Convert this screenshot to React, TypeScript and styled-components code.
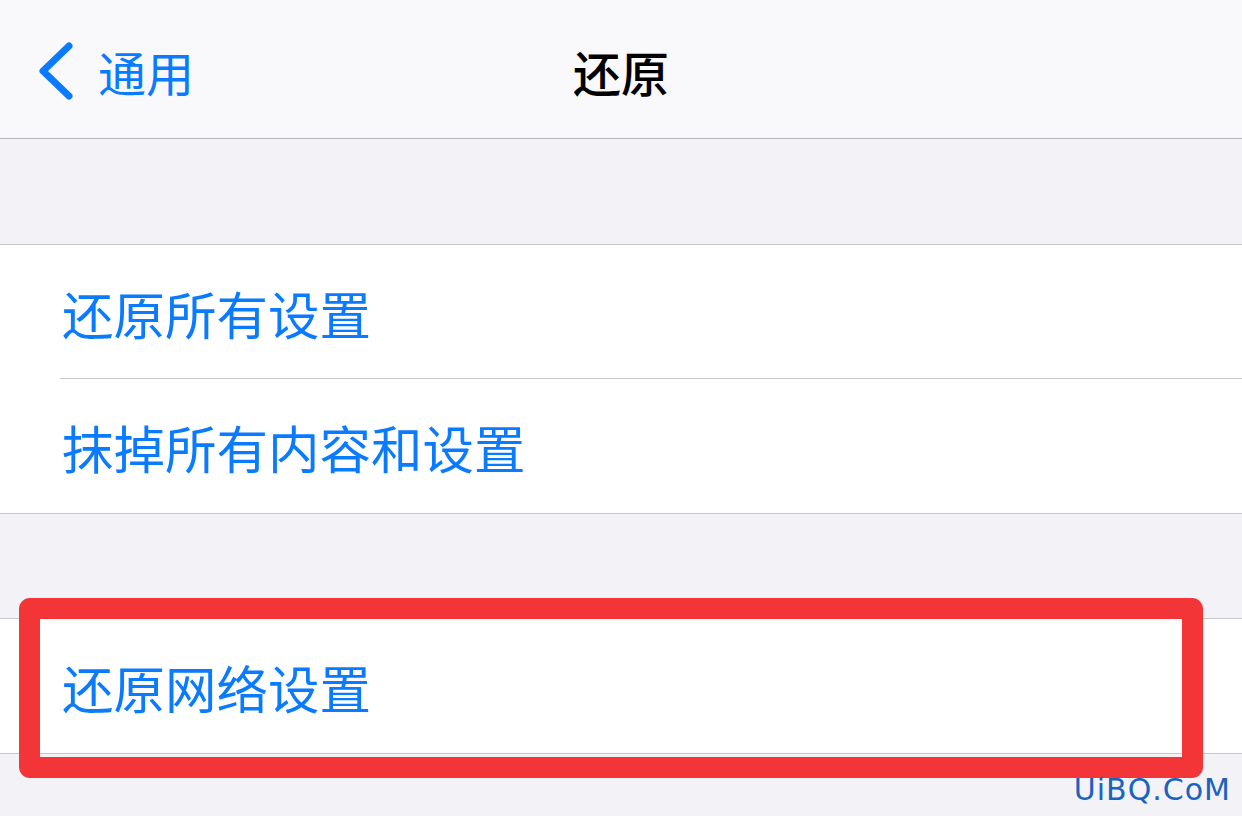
import React from "react";
import styled, { createGlobalStyle } from "styled-components";

const GlobalStyle = createGlobalStyle`
  html, body {
    margin: 0;
    padding: 0;
    background: #f2f2f7;
  }
  body {
    font-family: "Noto Sans CJK SC", "Noto Sans", sans-serif;
    -webkit-font-smoothing: antialiased;
  }
  * { box-sizing: border-box; }
`;

const Screen = styled.div`
  position: relative;
  width: 1242px;
  height: 816px;
  overflow: hidden;
  background: #f2f2f7;
  display: flex;
  flex-direction: column;
`;

const NavBar = styled.header`
  height: 139px;
  flex: none;
  background: #f9f9fb;
  border-bottom: 1px solid #b6b6ba;
  display: grid;
  grid-template-columns: 1fr auto 1fr;
  align-items: center;
  padding-top: 4px;
`;

const BackButton = styled.div`
  display: flex;
  align-items: center;
  gap: 24px;
  padding-left: 38px;
  color: #0a7bff;
  font-size: 48px;
  line-height: 1;
`;

const Title = styled.h1`
  margin: 0;
  font-size: 48px;
  font-weight: 500;
  color: #000;
  line-height: 1;
`;

const SectionGap = styled.div<{ $h: number }>`
  height: ${(p) => p.$h}px;
  flex: none;
`;

const Group = styled.section`
  background: #fff;
  border-top: 1px solid #c8c8cc;
  border-bottom: 1px solid #c8c8cc;
  flex: none;
`;

const Row = styled.div<{ $h: number; $divider?: boolean }>`
  height: ${(p) => p.$h}px;
  display: flex;
  align-items: center;
  padding-left: 62px;
  font-size: 51.5px;
  color: #0a7bff;
  position: relative;
  ${(p) =>
    p.$divider
      ? `
    &::after {
      content: "";
      position: absolute;
      left: 60px;
      right: 0;
      bottom: 0;
      height: 1px;
      background: #c8c8cc;
    }
  `
      : ""}
`;

const Highlight = styled.div`
  position: absolute;
  left: 19px;
  top: 598px;
  width: 1184px;
  height: 180px;
  border: 21px solid #f43538;
  border-radius: 11px;
  pointer-events: none;
`;

const Watermark = styled.div`
  position: absolute;
  right: 11px;
  top: 772px;
  font-family: "DejaVu Sans", "Open Sans", sans-serif;
  font-size: 30px;
  letter-spacing: 1px;
  color: #1b63bf;
  line-height: 1.2;
`;

const Chevron = () => (
  <svg width="36" height="58" viewBox="0 0 36 58" aria-hidden>
    <path
      d="M31 4 L5 29 L31 54"
      fill="none"
      stroke="#0a7bff"
      strokeWidth="7"
      strokeLinecap="round"
      strokeLinejoin="round"
    />
  </svg>
);

export default function App() {
  return (
    <>
      <GlobalStyle />
      <Screen>
        <NavBar>
          <BackButton>
            <Chevron />
            <span>通用</span>
          </BackButton>
          <Title>还原</Title>
          <div />
        </NavBar>
        <SectionGap $h={105} />
        <Group>
          <Row $h={134} $divider>还原所有设置</Row>
          <Row $h={134}>抹掉所有内容和设置</Row>
        </Group>
        <SectionGap $h={104} />
        <Group>
          <Row $h={134}>还原网络设置</Row>
        </Group>
        <Highlight />
        <Watermark>UiBQ.CoM</Watermark>
      </Screen>
    </>
  );
}
